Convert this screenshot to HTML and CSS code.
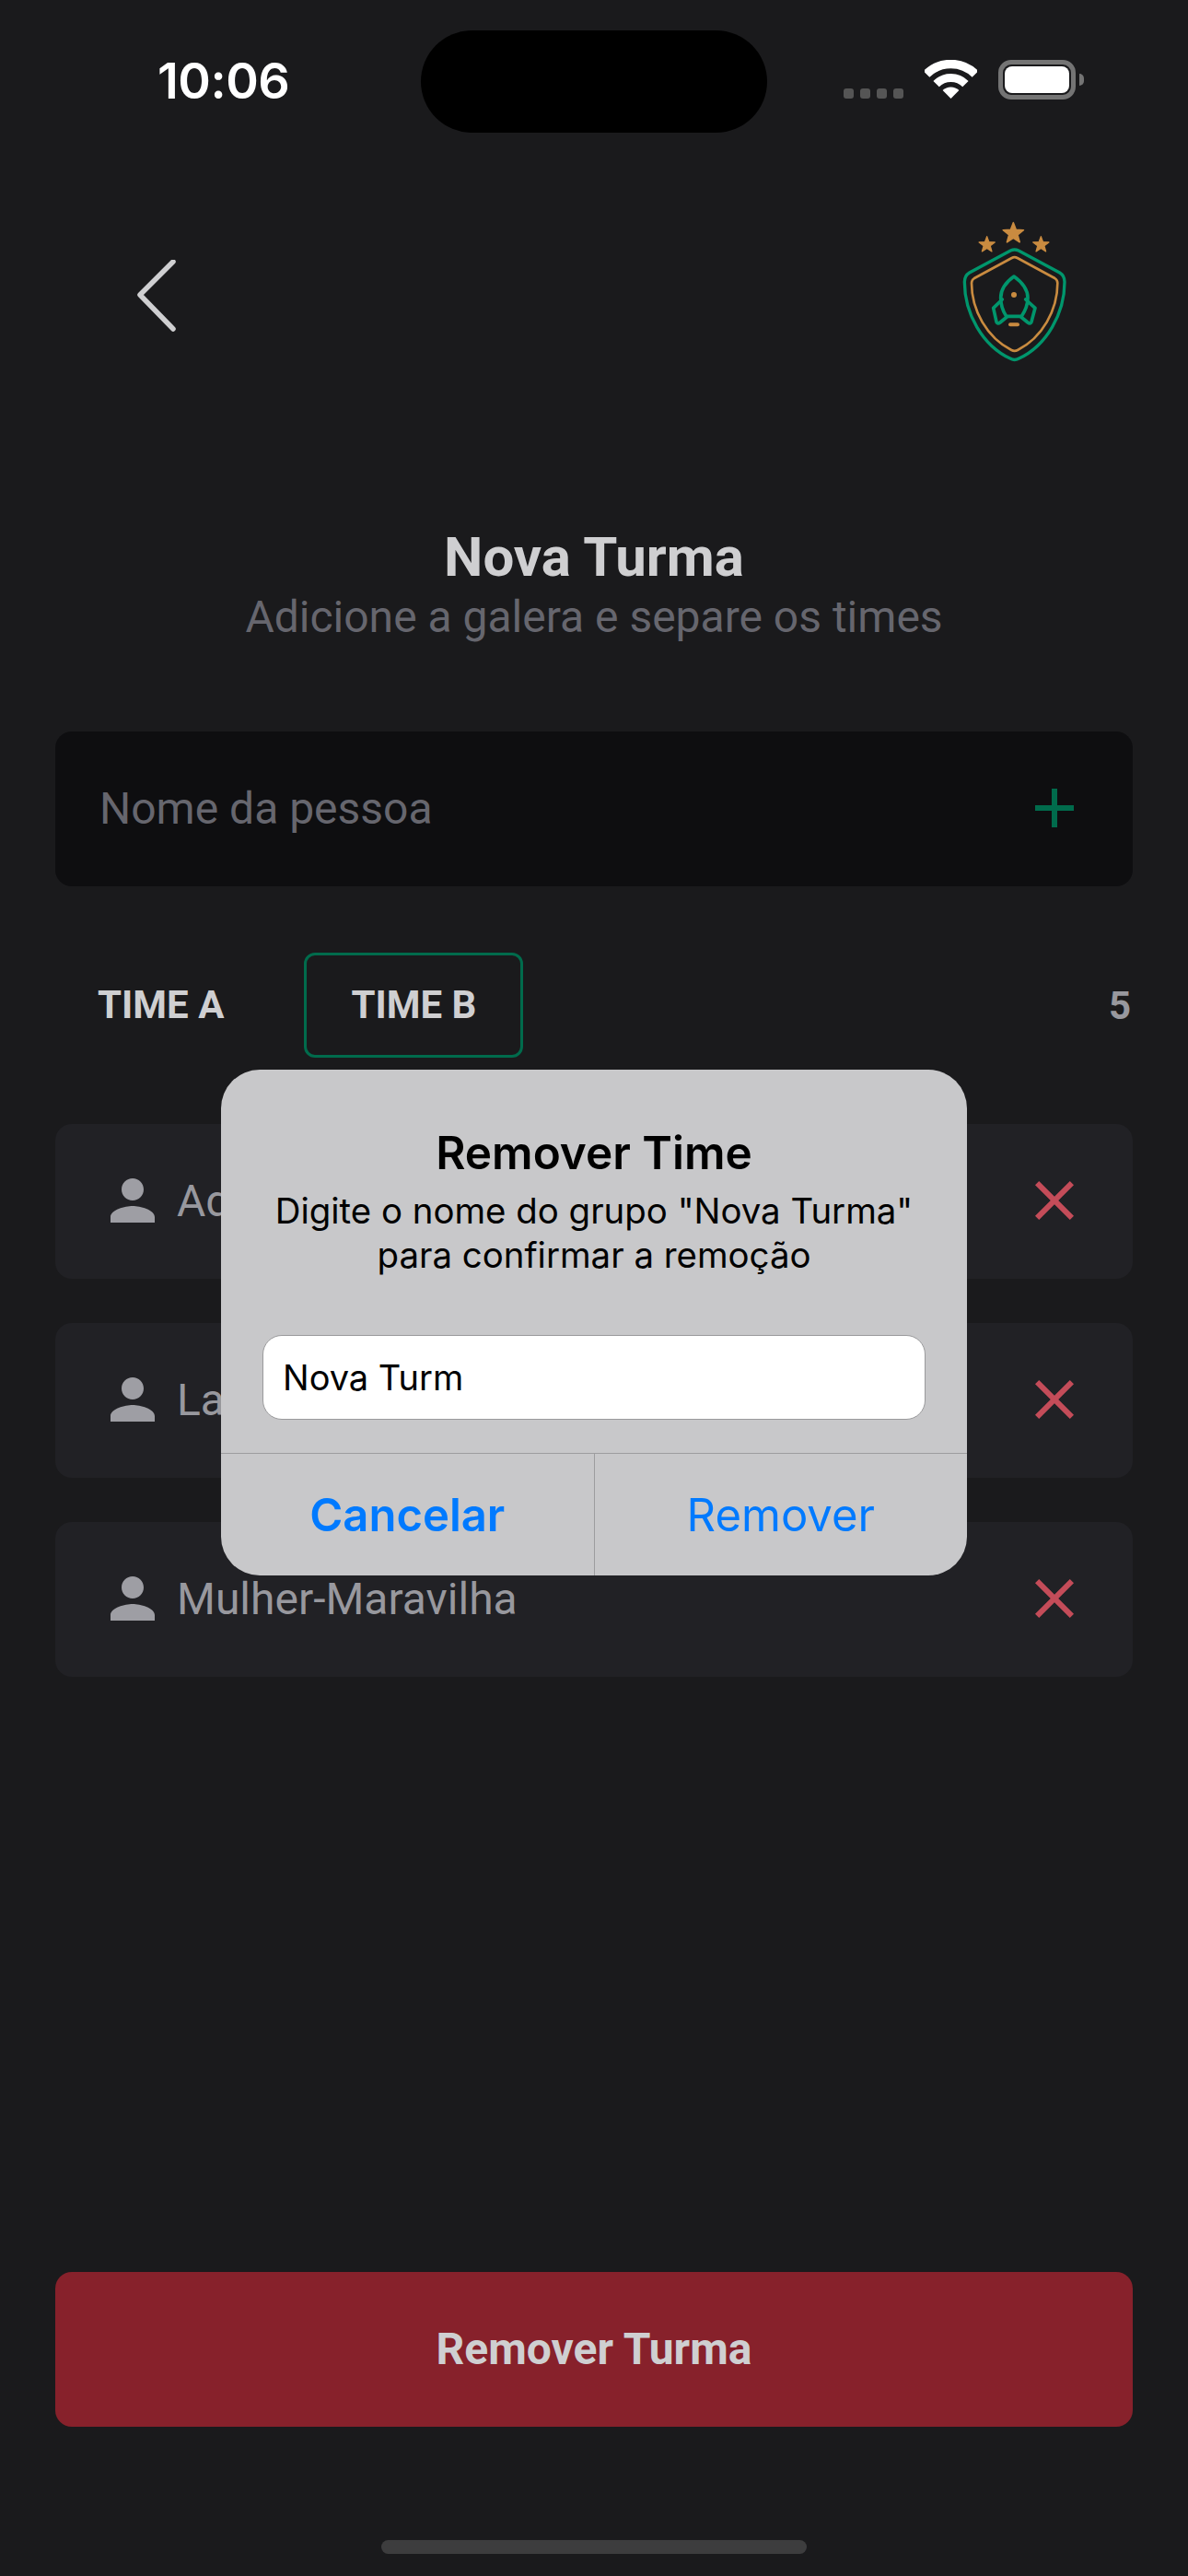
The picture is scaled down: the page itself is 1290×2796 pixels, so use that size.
FILE: index.html
```html
<!DOCTYPE html>
<html lang="en">

<head>
  <meta charset="UTF-8">
  <meta name="viewport" content="width=device-width, initial-scale=1.0">
  <title>Nova Turma</title>
  <link rel="stylesheet" href="styles.css">
</head>

<body>
  <div class="page">
    <!-- Status bar -->
    <div class="statusBar">
      <span class="clock">10:06</span>
      <div class="island"></div>
      <div class="signal"><i></i><i></i><i></i><i></i></div>
      <svg class="wifi" width="57" height="42" viewBox="0 0 57 42">
        <path d="M2 15.5A37.5 37.5 0 0 1 55 15.5" fill="none" stroke="#fff" stroke-width="9.5" />
        <path d="M12.6 26.1A22.5 22.5 0 0 1 44.4 26.1" fill="none" stroke="#fff" stroke-width="9" />
        <path d="M28.5 42L19.6 33.1A12.6 12.6 0 0 1 37.4 33.1Z" fill="#fff" />
      </svg>
      <div class="battery"><div class="batteryFill"></div></div>
      <div class="batteryTip"></div>
    </div>

    <!-- Header -->
    <div class="header">
      <svg class="backIcon" width="44" height="80" viewBox="0 0 44 80">
        <path d="M39 2L3 38L39 75" fill="none" stroke="#cfcfd1" stroke-width="5.5" stroke-linecap="round" stroke-linejoin="round" />
      </svg>
      <svg class="logo" width="170" height="190" viewBox="0 0 510 570">
        <defs>
          <path id="star" d="M0 -1L.247 -.34 .951 -.309 .4 .13 .588 .809 0 .42 -.588 .809 -.4 .13 -.951 -.309 -.247 -.34Z" fill="#c98b40" stroke="#c98b40" stroke-width=".14" stroke-linejoin="round" />
        </defs>
        <use href="#star" transform="translate(241 100) scale(35)" />
        <use href="#star" transform="translate(155 137) scale(27)" />
        <use href="#star" transform="translate(331 137) scale(27)" />
        <path d="M232 156Q245 150 258 156L392 228Q408 238 408 258C408 360 350 465 258 508Q245 515 232 508C140 465 82 360 82 258Q82 238 98 228Z" fill="none" stroke="#00966c" stroke-width="10" />
        <path d="M236 180Q245 175 254 180L376 246Q385 252 385 262C385 350 335 440 255 480Q245 485 235 480C155 440 105 350 105 262Q105 252 114 246Z" fill="none" stroke="#c98b40" stroke-width="8" />
        <path d="M243 240C222 255 200 280 200 310C200 335 208 355 218 370L268 370C278 355 288 335 288 310C288 280 264 255 243 240Z" fill="none" stroke="#00966c" stroke-width="11" stroke-linejoin="round" />
        <path d="M205 315L176 343L186 388Q190 396 198 390L220 372M281 315L312 343L300 388Q296 396 288 390L266 372" fill="none" stroke="#00966c" stroke-width="11" stroke-linejoin="round" stroke-linecap="round" />
        <circle cx="243" cy="300" r="9" fill="#c98b40" />
        <rect x="225" y="391" width="36" height="12" rx="6" fill="#c98b40" />
      </svg>
    </div>

    <h1 class="pageTitle">Nova Turma</h1>
    <p class="pageSubtitle">Adicione a galera e separe os times</p>

    <!-- Form to add a person -->
    <div class="personForm">
      <span class="placeholder">Nome da pessoa</span>
      <svg class="icon" viewBox="0 0 24 24"><path d="M19 13h-6v6h-2v-6H5v-2h6V5h2v6h6v2z" fill="#006b4c" /></svg>
    </div>

    <!-- Team tabs -->
    <div class="tabs">
      <div class="tab">TIME A</div>
      <div class="tab tabActive">TIME B</div>
      <span class="tabCount">5</span>
    </div>

    <!-- People list -->
    <div class="peopleList">
      <div class="personRow">
        <svg class="icon" viewBox="0 0 24 24"><path d="M12 12c2.21 0 4-1.79 4-4s-1.79-4-4-4-4 1.79-4 4 1.79 4 4 4zm0 2c-2.67 0-8 1.34-8 4v2h16v-2c0-2.66-5.33-4-8-4z" fill="#9e9ea4" /></svg>
        <span class="personName">Adão Negro</span>
        <svg class="icon" viewBox="0 0 24 24"><path d="M19 6.41L17.59 5 12 10.59 6.41 5 5 6.41 10.59 12 5 17.59 6.41 19 12 13.41 17.59 19 19 17.59 13.41 12z" fill="#c44c59" /></svg>
      </div>
      <div class="personRow">
        <svg class="icon" viewBox="0 0 24 24"><path d="M12 12c2.21 0 4-1.79 4-4s-1.79-4-4-4-4 1.79-4 4 1.79 4 4 4zm0 2c-2.67 0-8 1.34-8 4v2h16v-2c0-2.66-5.33-4-8-4z" fill="#9e9ea4" /></svg>
        <span class="personName">Lanterna Verde</span>
        <svg class="icon" viewBox="0 0 24 24"><path d="M19 6.41L17.59 5 12 10.59 6.41 5 5 6.41 10.59 12 5 17.59 6.41 19 12 13.41 17.59 19 19 17.59 13.41 12z" fill="#c44c59" /></svg>
      </div>
      <div class="personRow">
        <svg class="icon" viewBox="0 0 24 24"><path d="M12 12c2.21 0 4-1.79 4-4s-1.79-4-4-4-4 1.79-4 4 1.79 4 4 4zm0 2c-2.67 0-8 1.34-8 4v2h16v-2c0-2.66-5.33-4-8-4z" fill="#9e9ea4" /></svg>
        <span class="personName">Mulher-Maravilha</span>
        <svg class="icon" viewBox="0 0 24 24"><path d="M19 6.41L17.59 5 12 10.59 6.41 5 5 6.41 10.59 12 5 17.59 6.41 19 12 13.41 17.59 19 19 17.59 13.41 12z" fill="#c44c59" /></svg>
      </div>
    </div>

    <div class="removeButton">Remover Turma</div>
    <div class="homeBar"></div>

    <!-- Confirm dialog -->
    <div class="alert">
      <div class="alertTitle">Remover Time</div>
      <div class="alertText">Digite o nome do grupo "Nova Turma"<br>para confirmar a remoção</div>
      <div class="alertInput">Nova Turm</div>
      <div class="alertButtons">
        <div class="alertButton alertCancel">Cancelar</div>
        <div class="alertButton">Remover</div>
      </div>
    </div>
  </div>
</body>

</html>
```

FILE: styles.css
```css
* {
  box-sizing: border-box;
}

body {
  margin: 0;
  background-color: #1a1a1c;
  font-family: Roboto, sans-serif;
}

.page {
  position: relative;
  display: flex;
  flex-direction: column;
  width: 1290px;
  height: 2796px;
  overflow: hidden;
}

/* Status bar */
.statusBar {
  display: flex;
  align-items: flex-start;
  height: 144px;
  padding-top: 33px;
  padding-left: 171px;
}

.clock {
  width: 286px;
  margin-top: 25px;
  font-family: Inter, sans-serif;
  font-size: 54px;
  font-weight: 600;
  letter-spacing: -0.5px;
  line-height: 60px;
  color: #fff;
}

.island {
  width: 376px;
  height: 111px;
  border-radius: 56px;
  background-color: #000;
}

.signal {
  display: flex;
  gap: 7px;
  margin-top: 63px;
  margin-left: 83px;
}

.signal i {
  width: 11px;
  height: 11px;
  border-radius: 3px;
  background-color: #555;
}

.wifi {
  margin-top: 32px;
  margin-left: 23px;
}

.battery {
  width: 84px;
  height: 43px;
  margin-top: 32px;
  margin-left: 23px;
  padding: 2px;
  border: 5px solid #747474;
  border-radius: 14px;
}

.batteryFill {
  width: 100%;
  height: 100%;
  border-radius: 8px;
  background-color: #fff;
}

.batteryTip {
  width: 5px;
  height: 13px;
  margin-top: 47px;
  margin-left: 4px;
  border-radius: 0 6px 6px 0;
  background-color: #747474;
}

/* Header */
.header {
  display: flex;
  justify-content: space-between;
  align-items: flex-start;
  height: 426px;
  padding-top: 76px;
  padding-left: 149px;
  padding-right: 100px;
}

.backIcon {
  margin-top: 62px;
}

.pageTitle {
  margin: 0 0 2px;
  font-size: 60px;
  font-weight: 700;
  line-height: 70px;
  text-align: center;
  color: #cfcfd1;
}

.pageSubtitle {
  margin: 0 0 96px;
  font-size: 48px;
  line-height: 56px;
  text-align: center;
  color: #66666e;
}

.icon {
  flex: none;
  width: 72px;
  height: 72px;
}

/* Form */
.personForm {
  display: flex;
  justify-content: space-between;
  align-items: center;
  height: 168px;
  margin: 0 60px 72px;
  padding: 0 49px 2px 48px;
  border-radius: 18px;
  background-color: #0e0e10;
}

.placeholder {
  font-size: 48px;
  color: #66666e;
}

/* Tabs */
.tabs {
  display: flex;
  align-items: center;
  gap: 36px;
  height: 114px;
  margin: 0 62px 72px 55px;
}

.tab {
  padding: 0 48px;
  height: 114px;
  border: 3px solid transparent;
  border-radius: 12px;
  font-size: 42px;
  font-weight: 700;
  line-height: 108px;
  color: #cfcfd1;
}

.tabActive {
  border-color: #006b4c;
}

.tabCount {
  margin-left: auto;
  font-size: 42px;
  font-weight: 700;
  color: #98989e;
}

/* People list */
.peopleList {
  display: flex;
  flex-direction: column;
  gap: 48px;
  margin: 0 60px;
}

.personRow {
  display: flex;
  align-items: center;
  height: 168px;
  padding: 0 49px 2px 48px;
  border-radius: 18px;
  background-color: #212125;
}

.personName {
  flex: 1;
  margin-left: 12px;
  font-size: 48px;
  color: #98989e;
}

/* Bottom button */
.removeButton {
  height: 168px;
  margin: auto 60px 123px;
  border-radius: 18px;
  background-color: #87212b;
  font-size: 48px;
  font-weight: 700;
  line-height: 168px;
  text-align: center;
  color: #cfcfd1;
}

.homeBar {
  width: 462px;
  height: 15px;
  margin: 0 auto 24px;
  border-radius: 8px;
  background-color: #3d3d3e;
}

/* Dialog */
.alert {
  position: absolute;
  left: 240px;
  top: 1161px;
  width: 810px;
  height: 549px;
  padding-top: 60px;
  border-radius: 42px;
  background-color: #c8c8ca;
  font-family: Inter, sans-serif;
  text-align: center;
  color: #000;
}

.alertTitle {
  font-size: 49.5px;
  font-weight: 600;
  line-height: 60px;
}

.alertText {
  margin-top: 9px;
  font-size: 38.4px;
  line-height: 48px;
}

.alertInput {
  height: 92px;
  margin: 63px 45px 36px;
  padding-left: 21px;
  border: 1px solid #9a9a9c;
  border-radius: 21px;
  background-color: #fff;
  font-size: 38px;
  line-height: 90px;
  text-align: left;
}

.alertButtons {
  display: flex;
  height: 133px;
  border-top: 1px solid #9d9d9f;
}

.alertButton {
  flex: 1;
  font-size: 49px;
  line-height: 134px;
  color: #007aff;
}

.alertCancel {
  font-weight: 600;
  border-right: 1px solid #9d9d9f;
}
```
